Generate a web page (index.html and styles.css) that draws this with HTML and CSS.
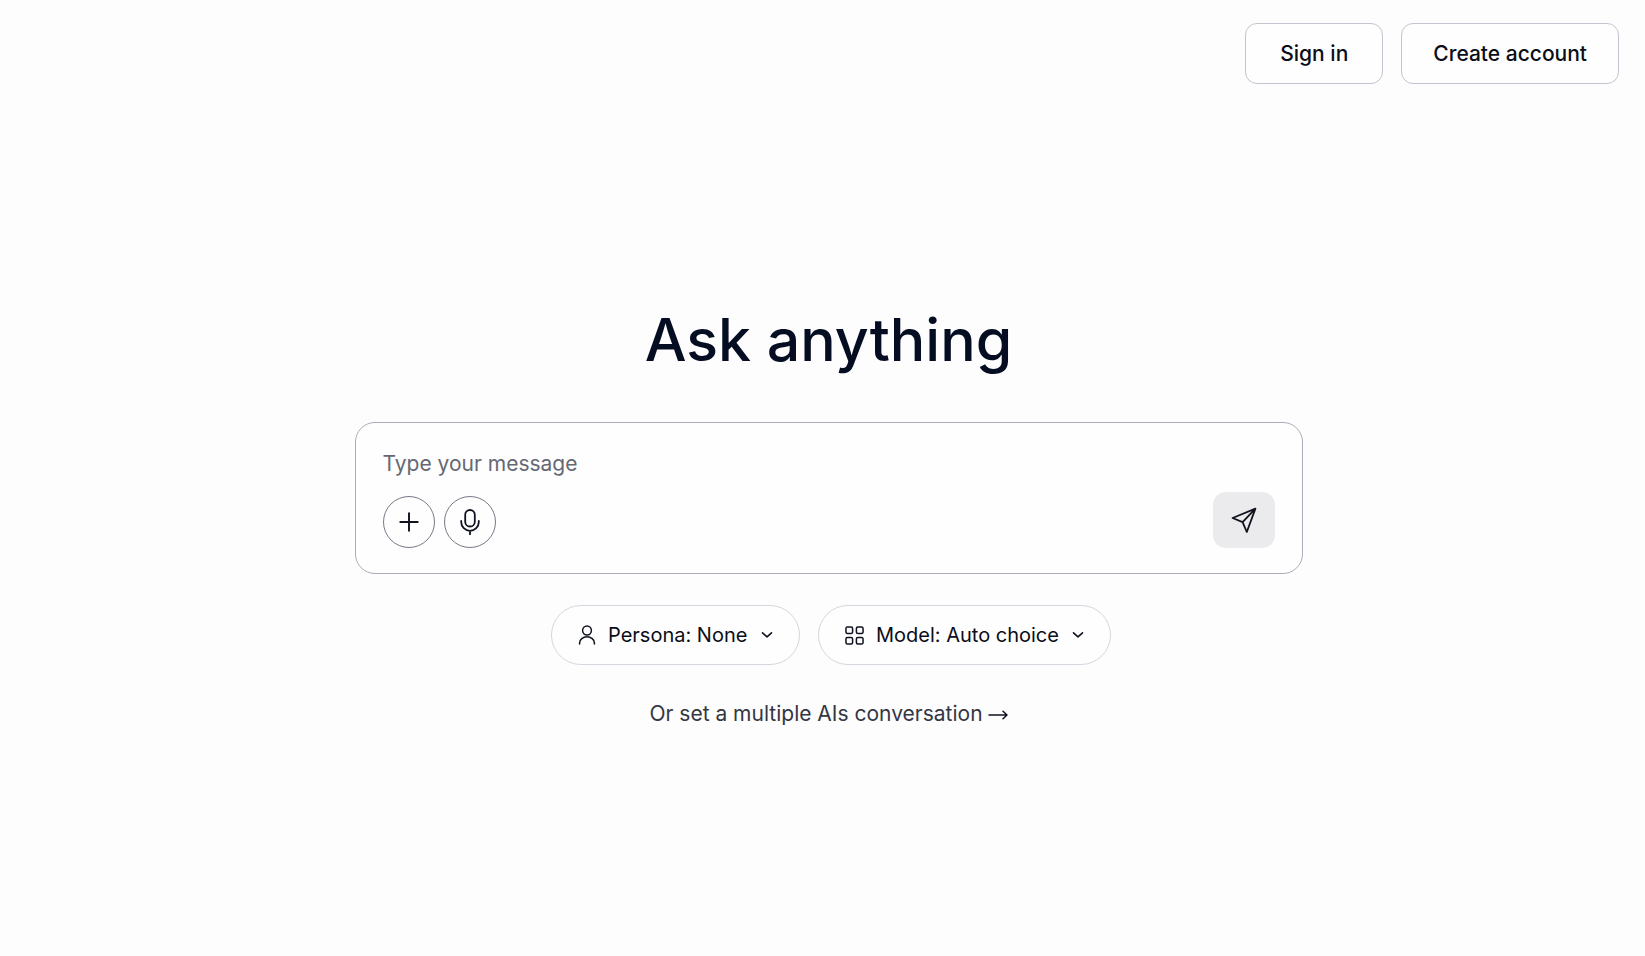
FILE: index.html
```html
<!DOCTYPE html>
<html lang="en">
<head>
    <meta charset="UTF-8">
    <meta name="viewport" content="width=device-width, initial-scale=1.0">
    <title>Ask anything</title>
    <link rel="stylesheet" href="styles.css">
</head>
<body>
    <header class="topbar">
        <button type="button" class="account-button">Sign in</button>
        <button type="button" class="account-button">Create account</button>
    </header>
    <main class="content">
        <h1 class="title">Ask anything</h1>
        <form class="composer">
            <input class="message" type="text" placeholder="Type your message" aria-label="Type your message">
            <div class="composer-actions">
                <button type="button" class="round-button" aria-label="Add attachment">
                    <svg class="icon" width="22" height="22" viewBox="0 0 24 24" stroke-width="2.1">
                        <path d="M12 2.500v19M2.500 12h19"/>
                    </svg>
                </button>
                <button type="button" class="round-button" aria-label="Voice input">
                    <svg class="icon" width="26" height="26" viewBox="0 0 26 26" stroke-width="1.8">
                        <rect x="8.2" y="1" width="9.6" height="16.5" rx="4.8"/>
                        <path d="M4.2 12v1a8.8 8.8 0 0 0 17.6 0v-1M13 21.8v3.600"/>
                    </svg>
                </button>
                <button type="submit" class="send-button" aria-label="Send message">
                    <svg class="icon" width="26" height="26" viewBox="0 0 26 26" stroke-width="1.8">
                        <path d="M1.600 11 24.400 1.600 15.800 25 11.600 15.200zM11.600 15.200 24.400 1.600"/>
                    </svg>
                </button>
            </div>
        </form>
        <div class="options">
            <div class="pill">
                <svg class="icon" width="18" height="20" viewBox="0 0 18 20" stroke-width="1.5">
                    <circle cx="9" cy="5.500" r="4.400"/>
                    <path d="M1.600 19v-1.200a7.400 6 0 0 1 14.800 0v1.200"/>
                </svg>
                <select class="pill-select" aria-label="Persona">
                    <option>Persona: None</option>
                </select>
                <svg class="icon" width="12" height="8" viewBox="0 0 12 8" stroke-width="1.6">
                    <path d="M1.500 1.800 6 5.800l4.500-4"/>
                </svg>
            </div>
            <div class="pill">
                <svg class="icon" width="19" height="19" viewBox="0 0 20 20" stroke-width="1.6">
                    <rect x="1" y="1" width="7" height="7" rx="1.600"/>
                    <rect x="12" y="1" width="7" height="7" rx="1.600"/>
                    <rect x="1" y="12" width="7" height="7" rx="1.600"/>
                    <rect x="12" y="12" width="7" height="7" rx="1.600"/>
                </svg>
                <select class="pill-select" aria-label="Model">
                    <option>Model: Auto choice</option>
                </select>
                <svg class="icon" width="12" height="8" viewBox="0 0 12 8" stroke-width="1.6">
                    <path d="M1.500 1.800 6 5.800l4.500-4"/>
                </svg>
            </div>
        </div>
        <a class="multi-link" href="#">
            Or set a multiple AIs conversation
            <svg class="icon" width="20" height="12" viewBox="0 0 20 12" stroke-width="1.5">
                <path d="M1 7h18M15 3.200 19 7l-4 3.800"/>
            </svg>
        </a>
    </main>
</body>
</html>
```
FILE: styles.css
```css
* {
    box-sizing: border-box;
}
body {
    display: flex;
    flex-direction: column;
    min-height: 100vh;
    margin: 0;
    background-color: #fdfdfd;
    color: #0b0d17;
    font-family: Inter, "Liberation Sans", sans-serif;
    font-size: 21px;
}
button,
input,
select {
    color: inherit;
    font: inherit;
}
button,
select {
    cursor: pointer;
}
.icon {
    flex: none;
    fill: none;
    stroke: #10131f;
    stroke-linecap: round;
    stroke-linejoin: round;
}
/* Account buttons in the top right corner */
.topbar {
    display: flex;
    justify-content: flex-end;
    gap: 18px;
    padding: 23px 26px 0;
}
.account-button {
    min-width: 138px;
    height: 61px;
    padding: 0 31px;
    border: 1px solid #c4c4cf;
    border-radius: 12px;
    background-color: #fefefe;
    font-weight: 500;
}
/* Centered column */
.content {
    display: flex;
    flex: 1;
    flex-direction: column;
    align-items: center;
    justify-content: center;
    padding: 0 0 9px 12px;
}
.title {
    margin: 0 0 46px;
    color: #050d22;
    font-size: 59px;
    font-weight: 500;
    line-height: 72px;
}
/* Message box */
.composer {
    display: flex;
    flex-direction: column;
    gap: 15px;
    width: 100%;
    max-width: 948px;
    padding: 26px 27px 25px;
    border: 1px solid #acacba;
    border-radius: 20px;
    background-color: #fefefe;
}
.message {
    width: 100%;
    height: 28px;
    padding: 0;
    border: none;
    outline: none;
    background: none;
}
.message::placeholder {
    color: #656873;
    opacity: 1;
}
.composer-actions {
    display: flex;
    align-items: flex-end;
    gap: 9px;
}
.round-button,
.send-button {
    display: flex;
    align-items: center;
    justify-content: center;
    padding: 0;
}
.round-button {
    width: 52px;
    height: 52px;
    border: 1px solid #777a87;
    border-radius: 50%;
    background-color: #fefefe;
}
.send-button {
    width: 62px;
    height: 56px;
    margin-left: auto;
    border: none;
    border-radius: 13px;
    background-color: #ebebed;
}
/* Persona and model pickers */
.options {
    display: flex;
    flex-wrap: wrap;
    justify-content: center;
    gap: 18px;
    margin-top: 31px;
    padding-left: 5px;
}
.pill {
    display: flex;
    align-items: center;
    height: 60px;
    padding: 0 26px;
    border: 1px solid #d6d6df;
    border-radius: 30px;
    background-color: #fefefe;
    font-size: 20px;
}
.pill-select {
    margin: 0 13px 0 12px;
    padding: 0;
    border: none;
    outline: none;
    appearance: none;
    background: none;
}
.multi-link {
    display: flex;
    align-items: center;
    gap: 5px;
    margin-top: 36px;
    color: #343743;
    line-height: 26px;
    text-decoration: none;
}
```
